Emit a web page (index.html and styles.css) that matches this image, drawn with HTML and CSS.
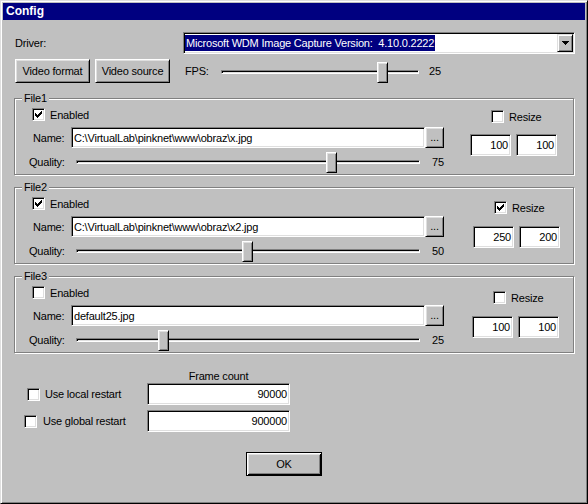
FILE: index.html
```html
<!DOCTYPE html>
<html>
<head>
<meta charset="utf-8">
<title>Config</title>
<link rel="stylesheet" href="styles.css">
</head>
<body>
<div class="window">
  <div class="titlebar">Config</div>
  <div class="content">
    <div class="driver-row">
      <span class="driver-lbl">Driver:</span>
      <div class="combo">
        <span class="combo-text">Microsoft WDM Image Capture Version:  4.10.0.2222</span>
        <span class="combo-btn"><svg width="7" height="4" viewBox="0 0 7 4"><path d="M0 0h7v1H0z M1 1h5v1H1z M2 2h3v1H2z M3 3h1v1H3z" fill="#000"/></svg></span>
      </div>
    </div>
    <div class="fps-row">
      <button class="btn btn-vf">Video format</button>
      <button class="btn btn-vs">Video source</button>
      <span class="fps-lbl">FPS:</span>
      <div class="slider fps-slider"><span class="thumb" style="left:155px"></span></div>
      <span class="val fps-val">25</span>
    </div>

    <fieldset class="group">
      <legend>File1</legend>
      <div class="group-body">
        <div class="group-left">
          <label class="check-row enabled-row"><span class="chk"><svg width="7" height="7" viewBox="0 0 7 7"><polygon points="0,2 1,2 1,3 2,3 2,4 3,4 3,3 4,3 4,2 5,2 5,1 6,1 6,0 7,0 7,3 6,3 6,4 5,4 5,5 4,5 4,6 3,6 3,7 2,7 2,6 1,6 1,5 0,5" fill="#000"/></svg></span>Enabled</label>
          <div class="name-row"><span class="name-lbl">Name:</span><div class="field name-field">C:\VirtualLab\pinknet\www\obraz\x.jpg</div><button class="btn browse">...</button></div>
          <div class="quality-row"><span class="q-lbl">Quality:</span><div class="slider q-slider"><span class="thumb" style="left:249px"></span></div><span class="val q-val">75</span></div>
        </div>
        <div class="group-right">
          <label class="check-row resize-row"><span class="chk"></span>Resize</label>
          <div class="size-row"><div class="field num">100</div><div class="field num">100</div></div>
        </div>
      </div>
    </fieldset>

    <fieldset class="group">
      <legend>File2</legend>
      <div class="group-body">
        <div class="group-left">
          <label class="check-row enabled-row"><span class="chk"><svg width="7" height="7" viewBox="0 0 7 7"><polygon points="0,2 1,2 1,3 2,3 2,4 3,4 3,3 4,3 4,2 5,2 5,1 6,1 6,0 7,0 7,3 6,3 6,4 5,4 5,5 4,5 4,6 3,6 3,7 2,7 2,6 1,6 1,5 0,5" fill="#000"/></svg></span>Enabled</label>
          <div class="name-row"><span class="name-lbl">Name:</span><div class="field name-field">C:\VirtualLab\pinknet\www\obraz\x2.jpg</div><button class="btn browse">...</button></div>
          <div class="quality-row"><span class="q-lbl">Quality:</span><div class="slider q-slider"><span class="thumb" style="left:165px"></span></div><span class="val q-val">50</span></div>
        </div>
        <div class="group-right r2">
          <label class="check-row resize-row"><span class="chk"><svg width="7" height="7" viewBox="0 0 7 7"><polygon points="0,2 1,2 1,3 2,3 2,4 3,4 3,3 4,3 4,2 5,2 5,1 6,1 6,0 7,0 7,3 6,3 6,4 5,4 5,5 4,5 4,6 3,6 3,7 2,7 2,6 1,6 1,5 0,5" fill="#000"/></svg></span>Resize</label>
          <div class="size-row"><div class="field num">250</div><div class="field num">200</div></div>
        </div>
      </div>
    </fieldset>

    <fieldset class="group">
      <legend>File3</legend>
      <div class="group-body">
        <div class="group-left">
          <label class="check-row enabled-row"><span class="chk"></span>Enabled</label>
          <div class="name-row"><span class="name-lbl">Name:</span><div class="field name-field">default25.jpg</div><button class="btn browse">...</button></div>
          <div class="quality-row"><span class="q-lbl">Quality:</span><div class="slider q-slider"><span class="thumb" style="left:81px"></span></div><span class="val q-val">25</span></div>
        </div>
        <div class="group-right r3">
          <label class="check-row resize-row"><span class="chk"></span>Resize</label>
          <div class="size-row"><div class="field num">100</div><div class="field num">100</div></div>
        </div>
      </div>
    </fieldset>

    <div class="restart">
      <div class="fc-label">Frame count</div>
      <div class="restart-row">
        <label class="check-row restart-lbl local"><span class="chk"></span>Use local restart</label>
        <div class="field num wide">90000</div>
      </div>
      <div class="restart-row second">
        <label class="check-row restart-lbl global"><span class="chk"></span>Use global restart</label>
        <div class="field num wide">900000</div>
      </div>
    </div>

    <button class="btn ok">OK</button>
  </div>
</div>
</body>
</html>
```

FILE: styles.css
```css
* { box-sizing: border-box; }
html, body { margin: 0; padding: 0; }
body {
  font-family: "Liberation Sans", Arial, sans-serif;
  font-size: 11px;
  letter-spacing: -0.2px;
  color: #000;
  background: #c0c0c0;
}

.window {
  width: 588px;
  height: 504px;
  background: #c0c0c0;
  border: 1px solid;
  border-color: #dfdfdf #000 #000 #dfdfdf;
  box-shadow: inset 1px 1px #fff, inset -1px -1px #808080;
  padding: 2px;
  display: flex;
  flex-direction: column;
}

.titlebar {
  height: 17px;
  background: #000080;
  color: #fff;
  font-weight: bold;
  font-size: 12px;
  letter-spacing: 0;
  line-height: 17px;
  padding-left: 3px;
}

.content {
  padding: 0 12px;
  display: flex;
  flex-direction: column;
}

/* generic 3D pieces */
.btn {
  font: inherit;
  letter-spacing: inherit;
  color: #000;
  background: #c0c0c0;
  border: 1px solid;
  border-color: #fff #000 #000 #fff;
  box-shadow: inset 1px 1px #dfdfdf, inset -1px -1px #808080;
  padding: 0;
  margin: 0;
}

.field {
  background: #fff;
  border: 1px solid;
  border-color: #808080 #fff #fff #808080;
  box-shadow: inset 1px 1px #000, inset -1px -1px #dfdfdf;
  display: flex;
  align-items: center;
  padding: 0 2px;
  white-space: nowrap;
  overflow: hidden;
}

.num { justify-content: flex-end; padding: 0 2px 0 0; }

.chk {
  width: 13px;
  height: 13px;
  flex-shrink: 0;
  background: #fff;
  border: 1px solid;
  border-color: #808080 #fff #fff #808080;
  box-shadow: inset 1px 1px #000, inset -1px -1px #dfdfdf;
  display: flex;
  align-items: center;
  justify-content: center;
}
.chk svg { display: block; }

.check-row {
  display: flex;
  align-items: center;
  height: 13px;
  gap: 5px;
  white-space: nowrap;
}

.slider {
  position: relative;
  height: 4px;
  border: 1px solid;
  border-color: #808080 #fff #fff #808080;
  box-shadow: inset 1px 1px #000, inset -1px -1px #dfdfdf;
  flex-shrink: 0;
}
.thumb {
  position: absolute;
  top: -9px;
  width: 11px;
  height: 21px;
  background: #c0c0c0;
  border: 1px solid;
  border-color: #fff #000 #000 #fff;
  box-shadow: inset 1px 1px #dfdfdf, inset -1px -1px #808080;
}

/* driver row */
.driver-row {
  display: flex;
  align-items: center;
  margin-top: 12px;
}
.driver-lbl { width: 168px; flex-shrink: 0; }
.combo {
  flex: 1;
  margin-right: -2px;
  height: 22px;
  background: #fff;
  border: 1px solid;
  border-color: #808080 #fff #fff #808080;
  box-shadow: inset 1px 1px #000, inset -1px -1px #dfdfdf;
  padding: 1px;
  display: flex;
  align-items: center;
}
.combo-text {
  background: #000080;
  color: #fff;
  height: 16px;
  line-height: 16px;
  padding: 0 1px;
  white-space: pre;
}
.combo-btn {
  margin-left: auto;
  width: 16px;
  height: 18px;
  background: #c0c0c0;
  border: 1px solid;
  border-color: #dfdfdf #000 #000 #dfdfdf;
  box-shadow: inset 1px 1px #fff, inset -1px -1px #808080;
  display: flex;
  align-items: center;
  justify-content: center;
}
.combo-btn svg { display: block; }

/* fps row */
.fps-row {
  display: flex;
  align-items: center;
  margin-top: 5px;
  height: 24px;
}
.btn-vf, .btn-vs { width: 75px; height: 24px; }
.btn-vs { margin-left: 5px; }
.fps-lbl { margin-left: 15px; width: 36px; }
.fps-slider { width: 198px; margin-top: 2px; }
.fps-val { margin-left: 10px; }

/* file groups */
.group {
  margin: 9px -1px 0 -1px;
  padding: 0;
  min-width: 0;
  border: 1px solid #808080;
  box-shadow: inset 1px 1px #fff, 1px 1px #fff;
}
.group + .group { margin-top: 6px; }
.group legend {
  margin-left: 7px;
  padding: 0 2px;
  line-height: 13px;
  background: #c0c0c0;
}
.group-body {
  display: flex;
  padding: 3px 0 2px 0;
}
.group-left { display: flex; flex-direction: column; }
.enabled-row { margin-left: 17px; }
.name-row {
  display: flex;
  align-items: center;
  margin-top: 6px;
  margin-left: 18px;
}
.name-lbl { width: 38px; }
.name-field { width: 354px; height: 21px; padding-left: 2px; }
.browse { width: 19px; height: 21px; line-height: 13px; }
.quality-row {
  display: flex;
  align-items: center;
  margin-top: 3px;
  margin-left: 14px;
  height: 21px;
}
.q-lbl { width: 47px; }
.q-slider { width: 344px; }
.q-val { margin-left: 12px; }

.group-right {
  margin-left: auto;
  padding: 2px 16px 0 0;
  display: flex;
  flex-direction: column;
}
.resize-row { padding-left: 21px; }
.size-row {
  display: flex;
  gap: 5px;
  margin-top: 11px;
}
.size-row .field { width: 41px; height: 22px; }
.group-right.r2 { padding-top: 4px; padding-right: 13px; }
.group-right.r2 .size-row { margin-top: 12px; }
.group-right.r3 { padding-top: 5px; padding-right: 14px; }
.group-right.r3 .size-row { margin-top: 12px; }

/* restart section */
.restart {
  display: flex;
  flex-direction: column;
  margin-top: 17px;
}
.fc-label {
  margin-left: 132px;
  width: 143px;
  text-align: center;
  line-height: 13px;
}
.restart-row {
  display: flex;
  align-items: center;
}
.restart-row.second { margin-top: 5px; }
.restart-lbl { width: 132px; }
.restart-lbl.local { padding-left: 12px; }
.restart-lbl.global { padding-left: 9px; gap: 6px; }
.wide { width: 143px; height: 22px; }

.ok {
  align-self: flex-start;
  margin-top: 20px;
  margin-left: 231px;
  width: 76px;
  height: 24px;
  border: 1px solid #000;
  box-shadow: inset 1px 1px #fff, inset -1px -1px #000, inset 2px 2px #dfdfdf, inset -2px -2px #808080;
}
```
